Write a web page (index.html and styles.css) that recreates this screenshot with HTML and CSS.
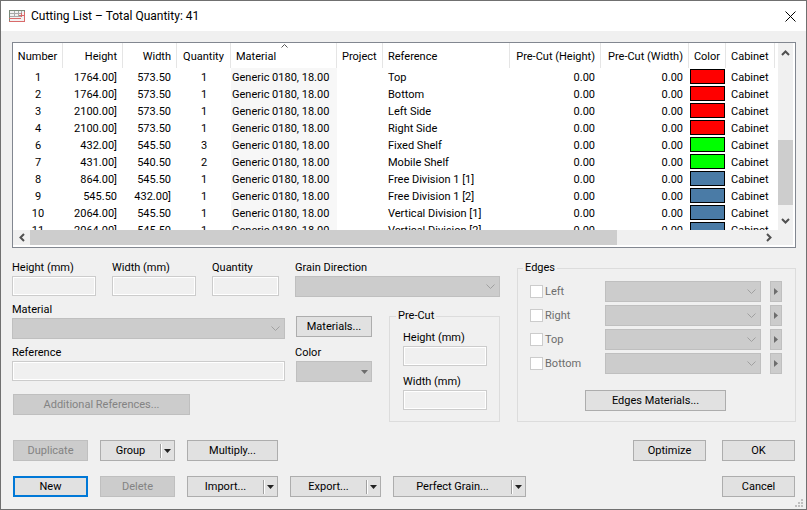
FILE: index.html
```html
<!DOCTYPE html>
<html lang="en">
  <head>
    <meta charset="utf-8">
    <title>Cutting List</title>
    <link rel="stylesheet" href="styles.css">
  </head>
  <body>
    <div class="dialog">
      <header class="titlebar">
        <svg class="app-icon" width="16" height="12" viewBox="0 0 16 12">
          <rect x="0.5" y="0.5" width="15" height="11" fill="#f1f1f1" stroke="#7a8a7a"/>
          <path d="M1 3.5h11M1 6.5h11M5.5 1v6M9.5 1v6M12.5 1v3" fill="none" stroke="#a8a8a8"/>
          <path d="M0 8.5h12M0 11.5h16M15.5 2v10M10 5.5h5M12.5 3v4" fill="none" stroke="#d96a6a"/>
        </svg>
        <h1>Cutting List – Total Quantity: 41</h1>
        <button class="close" type="button" aria-label="Close">
          <svg width="11" height="11" viewBox="0 0 11 11"><path d="M0.5 0.5l10 10M10.5 0.5l-10 10" stroke="#000" fill="none"/></svg>
        </button>
      </header>

      <main class="content">
        <div class="list">
          <div class="viewport">
            <table>
              <colgroup>
                <col class="w-number"><col class="w-height"><col class="w-width"><col class="w-qty">
                <col class="w-material"><col class="w-project"><col class="w-ref"><col class="w-preh">
                <col class="w-prew"><col class="w-color"><col class="w-cabinet">
              </colgroup>
              <thead>
                <tr>
                  <th class="mid">Number</th>
                  <th class="num">Height</th>
                  <th class="num">Width</th>
                  <th class="mid">Quantity</th>
                  <th>Material<svg class="sort" width="7" height="4" viewBox="0 0 7 4"><path d="M0.5 3.5l3-3 3 3" stroke="#555" fill="none"/></svg></th>
                  <th>Project</th>
                  <th>Reference</th>
                  <th class="num">Pre-Cut (Height)</th>
                  <th class="num">Pre-Cut (Width)</th>
                  <th class="mid">Color</th>
                  <th>Cabinet</th>
                </tr>
              </thead>
              <tbody id="rows"></tbody>
            </table>
          </div>
          <div class="vbar">
            <svg class="arrow" width="15" height="17" viewBox="0 0 15 17"><path d="M4 12l3.5-3.500 3.500 3.500" stroke="#505050" stroke-width="2" fill="none"/></svg>
            <div class="track"><div class="thumb"></div></div>
            <svg class="arrow" width="15" height="17" viewBox="0 0 15 17"><path d="M4 6l3.500 3.500 3.500-3.500" stroke="#505050" stroke-width="2" fill="none"/></svg>
          </div>
          <div class="hbar">
            <svg class="arrow" width="17" height="15" viewBox="0 0 17 15"><path d="M11 4l-3.500 3.500 3.500 3.500" stroke="#505050" stroke-width="2" fill="none"/></svg>
            <div class="track"><div class="thumb"></div></div>
            <svg class="arrow" width="17" height="15" viewBox="0 0 17 15"><path d="M3 4l3.500 3.500-3.500 3.500" stroke="#505050" stroke-width="2" fill="none"/></svg>
          </div>
        </div>

        <form class="form">
          <div class="part">
            <div class="sizes">
              <div class="field"><label for="height">Height (mm)</label><input id="height" type="text" disabled></div>
              <div class="field"><label for="width">Width (mm)</label><input id="width" type="text" disabled></div>
              <div class="field"><label for="quantity">Quantity</label><input id="quantity" type="text" disabled></div>
            </div>
            <div class="field"><label for="material">Material</label><select id="material" disabled></select></div>
            <div class="field"><label for="reference">Reference</label><input id="reference" type="text" disabled></div>
            <button class="btn additional" type="button" disabled>Additional References...</button>
          </div>

          <div class="middle">
            <div class="field"><label for="grain">Grain Direction</label><select id="grain" disabled></select></div>
            <div class="lower">
              <div class="pickers">
                <button class="btn" type="button">Materials...</button>
                <div class="field color">
                  <label for="color">Color</label>
                  <button id="color" class="btn" type="button" disabled><svg width="7" height="4" viewBox="0 0 7 4"><path d="M0 0h7L3.500 4z" fill="#6d6d6d"/></svg></button>
                </div>
              </div>
              <fieldset class="precut">
                <legend>Pre-Cut</legend>
                <div class="field"><label for="pre-height">Height (mm)</label><input id="pre-height" type="text" disabled></div>
                <div class="field"><label for="pre-width">Width (mm)</label><input id="pre-width" type="text" disabled></div>
              </fieldset>
            </div>
          </div>

          <fieldset class="edges">
            <legend>Edges</legend>
            <div class="edge">
              <label><input type="checkbox" disabled>Left</label>
              <select aria-label="Left edge" disabled></select>
              <button class="btn more" type="button" aria-label="Left edge options" disabled><svg width="4" height="7" viewBox="0 0 4 7"><path d="M0 0v7l4-3.500z" fill="#6d6d6d"/></svg></button>
            </div>
            <div class="edge">
              <label><input type="checkbox" disabled>Right</label>
              <select aria-label="Right edge" disabled></select>
              <button class="btn more" type="button" aria-label="Right edge options" disabled><svg width="4" height="7" viewBox="0 0 4 7"><path d="M0 0v7l4-3.500z" fill="#6d6d6d"/></svg></button>
            </div>
            <div class="edge">
              <label><input type="checkbox" disabled>Top</label>
              <select aria-label="Top edge" disabled></select>
              <button class="btn more" type="button" aria-label="Top edge options" disabled><svg width="4" height="7" viewBox="0 0 4 7"><path d="M0 0v7l4-3.500z" fill="#6d6d6d"/></svg></button>
            </div>
            <div class="edge">
              <label><input type="checkbox" disabled>Bottom</label>
              <select aria-label="Bottom edge" disabled></select>
              <button class="btn more" type="button" aria-label="Bottom edge options" disabled><svg width="4" height="7" viewBox="0 0 4 7"><path d="M0 0v7l4-3.500z" fill="#6d6d6d"/></svg></button>
            </div>
            <button class="btn edge-materials" type="button">Edges Materials...</button>
          </fieldset>
        </form>

        <footer class="actions">
          <div class="bar">
            <button class="btn small" type="button" disabled>Duplicate</button>
            <button class="btn small split" type="button"><span>Group</span><svg width="7" height="4" viewBox="0 0 7 4"><path d="M0 0h7L3.500 4z" fill="#222"/></svg></button>
            <button class="btn medium" type="button">Multiply...</button>
            <div class="right">
              <button class="btn" type="button">Optimize</button>
              <button class="btn" type="button">OK</button>
            </div>
          </div>
          <div class="bar">
            <button class="btn small default" type="button">New</button>
            <button class="btn small" type="button" disabled>Delete</button>
            <button class="btn medium split" type="button"><span>Import...</span><svg width="7" height="4" viewBox="0 0 7 4"><path d="M0 0h7L3.500 4z" fill="#222"/></svg></button>
            <button class="btn medium split" type="button"><span>Export...</span><svg width="7" height="4" viewBox="0 0 7 4"><path d="M0 0h7L3.500 4z" fill="#222"/></svg></button>
            <button class="btn large split" type="button"><span>Perfect Grain...</span><svg width="7" height="4" viewBox="0 0 7 4"><path d="M0 0h7L3.500 4z" fill="#222"/></svg></button>
            <div class="right">
              <button class="btn" type="button">Cancel</button>
            </div>
          </div>
        </footer>
      </main>
      <svg class="grip" width="8" height="8" viewBox="0 0 8 8"><path d="M6 0h2v2H6zM3 3h2v2H3zM6 3h2v2H6zM0 6h2v2H0zM3 6h2v2H3zM6 6h2v2H6z" fill="#bfbfbf"/></svg>
    </div>
    <script src="script.js"></script>
  </body>
</html>
```

FILE: styles.css
```css
* {
  box-sizing: border-box;
}

body {
  margin: 0;
  background: #f0f0f0;
  color: #000;
  font-family: Roboto, "Liberation Sans", sans-serif;
  font-size: 11px;
  line-height: 14px;
}

button,
input,
select {
  margin: 0;
  font: inherit;
  color: inherit;
}

.dialog {
  position: relative;
  min-height: 100vh;
  border: 1px solid #707070;
  background: #f0f0f0;
}

.titlebar {
  display: flex;
  align-items: center;
  height: 30px;
  padding: 0 10px 0 8px;
  background: #fff;
}

.titlebar h1 {
  flex: 1;
  margin: 0 0 0 6px;
  font-size: 12px;
  font-weight: normal;
  line-height: 16px;
}

.close {
  display: flex;
  padding: 0;
  border: 0;
  background: none;
}

.content {
  padding: 11px 10px 12px 11px;
}

/* parts list */
.list {
  display: grid;
  grid-template-columns: 1fr 15px;
  grid-template-rows: 187px 15px;
  padding-right: 2px;
  padding-bottom: 2px;
  border: 1px solid #828790;
  background: #fff;
}

.viewport {
  overflow: hidden;
}

table {
  width: 762px;
  table-layout: fixed;
  border-collapse: separate;
  border-spacing: 0;
}

.w-number { width: 50px; }
.w-height { width: 60px; }
.w-width { width: 54px; }
.w-qty { width: 54px; }
.w-material { width: 106px; }
.w-project { width: 46px; }
.w-ref { width: 127px; }
.w-preh { width: 91px; }
.w-prew { width: 88px; }
.w-color { width: 37px; }
.w-cabinet { width: 49px; }

th,
td {
  padding: 2px 5px 0;
  text-align: left;
  font-weight: normal;
  white-space: nowrap;
}

th {
  position: relative;
  height: 25px;
  border-right: 1px solid #e5e5e5;
}

td {
  height: 17px;
}

th.num,
td.num {
  text-align: right;
}

td.num {
  padding-right: 6px;
}

th.mid,
td.mid {
  padding-left: 0;
  padding-right: 0;
  text-align: center;
}

td.material {
  padding-left: 1px;
  padding-right: 1px;
  background: #f7f7f7;
}

td.swatch {
  padding: 1px;
}

.swatch div {
  height: 15px;
  border: 1px solid #000;
}

.red { background: #f00; }
.green { background: #0f0; }
.blue { background: #4a7ba6; }

.sort {
  position: absolute;
  top: 1px;
  left: 50px;
}

.vbar,
.hbar {
  display: flex;
  background: #f0f0f0;
}

.vbar {
  flex-direction: column;
}

.hbar {
  grid-column: 1 / 3;
  padding-right: 12px;
}

.arrow {
  flex: none;
}

.track {
  display: flex;
  flex: 1;
}

.thumb {
  background: #cdcdcd;
}

.vbar .track {
  flex-direction: column;
  justify-content: flex-end;
  padding-bottom: 8px;
}

.vbar .thumb {
  height: 45%;
}

.hbar .thumb {
  width: 80%;
}

/* part properties */
.form {
  display: grid;
  grid-template-columns: 273px 205px 1fr;
  margin-top: 12px;
}

.part {
  display: flex;
  flex-direction: column;
  gap: 6px;
}

.sizes {
  display: grid;
  grid-template-columns: 84px 84px 67px;
  column-gap: 16px;
}

.field {
  display: flex;
  flex-direction: column;
}

.field label {
  line-height: 16px;
}

input[type="text"] {
  width: 100%;
  height: 20px;
  padding: 0 3px;
  border: 1px solid #ccc;
  background: #f0f0f0;
  box-shadow: inset 0 0 0 1px #fff;
}

select {
  appearance: none;
  width: 100%;
  height: 21px;
  padding: 0 20px 0 4px;
  border: 1px solid #bfbfbf;
  border-radius: 0;
  background: #ccc url("data:image/svg+xml,%3Csvg xmlns='http://www.w3.org/2000/svg' width='9' height='6'%3E%3Cpath d='M.5.5l4 4 4-4' fill='none' stroke='%23a0a0a0'/%3E%3C/svg%3E") no-repeat right 4px center;
  opacity: 1;
}

.btn {
  height: 21px;
  padding: 0;
  border: 1px solid #adadad;
  background: #e1e1e1;
}

.btn:disabled {
  border-color: #bfbfbf;
  background: #ccc;
  color: #838383;
}

.btn.default {
  border: 2px solid #0078d7;
}

.additional {
  width: 177px;
  margin-top: 7px;
  margin-left: 1px;
}

.middle {
  display: flex;
  flex-direction: column;
  gap: 11px;
  margin-left: 10px;
  width: 205px;
}

.lower {
  display: flex;
  justify-content: space-between;
}

.pickers {
  display: flex;
  flex-direction: column;
  gap: 8px;
  width: 77px;
  padding-top: 8px;
}

.pickers .btn {
  margin-left: 1px;
}

.color .btn {
  display: flex;
  align-items: center;
  justify-content: flex-end;
  padding-right: 3px;
}

fieldset {
  min-width: 0;
  margin: 0;
  border: 1px solid #dcdcdc;
}

legend {
  margin-left: -7px;
  padding: 0 2px;
  line-height: 16px;
}

.precut {
  display: flex;
  flex-direction: column;
  gap: 8px;
  width: 111px;
  padding: 6px 12px 11px 13px;
}

.edges {
  margin-left: 27px;
  padding: 5px 13px 10px 12px;
}

.edge {
  display: flex;
  align-items: center;
  margin-bottom: 3px;
}

.edge label {
  display: flex;
  align-items: center;
  flex: none;
  gap: 2px;
  width: 75px;
  color: #6d6d6d;
}

.edge select {
  flex: 1;
}

input[type="checkbox"] {
  appearance: none;
  width: 13px;
  height: 13px;
  border: 1px solid #ccc;
  background: #fff;
}

.more {
  display: flex;
  align-items: center;
  justify-content: center;
  width: 12px;
  margin-left: 9px;
}

.edge-materials {
  display: block;
  width: 141px;
  margin: 16px 0 0 55px;
}

/* bottom buttons */
.actions {
  display: flex;
  flex-direction: column;
  gap: 15px;
  margin-top: 18px;
  padding-left: 1px;
}

.bar {
  display: flex;
  gap: 12px;
}

.small { width: 75px; }
.medium { width: 91px; }
.large { width: 133px; }

.split {
  display: flex;
  align-items: center;
  padding-right: 3px;
}

.split span {
  flex: 1;
  margin-right: 3px;
  border-right: 1px solid #a0a0a0;
  box-shadow: 1px 0 #fff;
}

.right {
  display: flex;
  gap: 16px;
  margin-left: auto;
  padding-right: 1px;
}

.right .btn {
  width: 73px;
}

.grip {
  position: absolute;
  right: 3px;
  bottom: 2px;
}
```

FILE: script.js
```js
// number, height, width, quantity, reference, color
const parts = [
  [1, "1764.00]", "573.50", 1, "Top", "red"],
  [2, "1764.00]", "573.50", 1, "Bottom", "red"],
  [3, "2100.00]", "573.50", 1, "Left Side", "red"],
  [4, "2100.00]", "573.50", 1, "Right Side", "red"],
  [6, "432.00]", "545.50", 3, "Fixed Shelf", "green"],
  [7, "431.00]", "540.50", 2, "Mobile Shelf", "green"],
  [8, "864.00]", "545.50", 1, "Free Division 1 [1]", "blue"],
  [9, "545.50", "432.00]", 1, "Free Division 1 [2]", "blue"],
  [10, "2064.00]", "545.50", 1, "Vertical Division [1]", "blue"],
  [11, "2064.00]", "545.50", 1, "Vertical Division [2]", "blue"],
];

document.getElementById("rows").innerHTML = parts
  .map(([number, height, width, quantity, reference, color]) => `
    <tr>
      <td class="mid">${number}</td>
      <td class="num">${height}</td>
      <td class="num">${width}</td>
      <td class="mid">${quantity}</td>
      <td class="material">Generic 0180, 18.00</td>
      <td></td>
      <td>${reference}</td>
      <td class="num">0.00</td>
      <td class="num">0.00</td>
      <td class="swatch"><div class="${color}"></div></td>
      <td>Cabinet</td>
    </tr>`)
  .join("");
```
